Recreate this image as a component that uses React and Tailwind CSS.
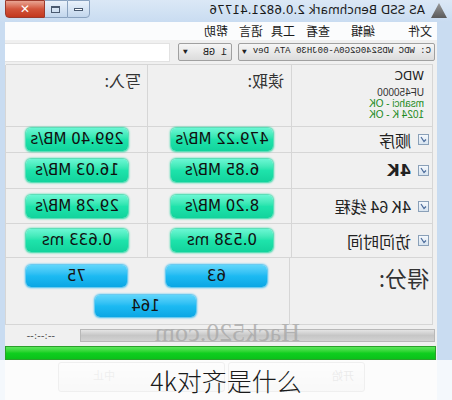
import React from 'react';

const ROWS = [
  { label: '顺序', read: '479.22 MB/s', write: '299.40 MB/s', h: 'h-[26px]' },
  { label: '4K', read: '6.85 MB/s', write: '16.03 MB/s', h: 'h-[36px]', bold: true },
  { label: '4K 64 线程', read: '8.20 MB/s', write: '29.28 MB/s', h: 'h-[35px]' },
  { label: '访问时间', read: '0.538 ms', write: '0.633 ms', h: 'h-[34px]' },
];

const MENU = [
  { t: '文件', ml: 'ml-[5px]' },
  { t: '编辑', ml: 'ml-[32px]' },
  { t: '查看', ml: 'ml-[20px]' },
  { t: '工具', ml: 'ml-[10px]' },
  { t: '语言', ml: 'ml-[7px]' },
  { t: '帮助', ml: 'ml-[10px]' },
];

function ValBox({ value }) {
  return (
    <div className="h-[23px] w-[102px] rounded-[5px] bg-linear-to-b from-[#6af7d4] via-[#1ee3ab] to-[#12d39c] shadow-[0_0_2px_1px_#2bd8a4] flex items-center justify-center text-[15px] font-['DejaVu_Sans'] text-[#101010]">
      {value}
    </div>
  );
}

function ScoreBox({ value }) {
  return (
    <div className="h-[22px] w-[101px] rounded-[5px] bg-linear-to-b from-[#5fd6fb] via-[#1cbaf2] to-[#0aa6e4] shadow-[0_0_2px_1px_#3cbdf0] flex items-center justify-center text-[15px] font-['DejaVu_Sans'] text-[#141414]">
      {value}
    </div>
  );
}

function Check() {
  return (
    <div className="w-[11px] h-[11px] border border-[#8aa0b8] bg-linear-to-b from-[#f4f8fc] to-[#d8e4f0] flex items-center justify-center">
      <svg width="7" height="7" viewBox="0 0 7 7">
        <path d="M1 3.5 L3 5.5 L6 1" stroke="#4a6a9a" strokeWidth="1.2" fill="none" />
      </svg>
    </div>
  );
}

export default function App() {
  return (
    <div className="relative w-[452px] h-[400px] overflow-hidden bg-[#c9dcf1]">
      {/* the whole window is shown mirrored */}
      <div className="relative -scale-x-100 w-full h-full flex flex-col font-['Noto_Sans_CJK_SC',sans-serif]">
        {/* title bar */}
        <div className="h-[22px] flex items-start bg-linear-to-b from-[#dbe8f6] to-[#c9dcf1]">
          <div className="mt-[3px] ml-[5px] w-[16px] h-[15px] bg-linear-to-b from-[#9a9a9a] to-[#5a5a5a] [clip-path:polygon(50%_0,100%_100%,0_100%)]" />
          <div className="ml-[6px] mt-[3px] text-[12px] leading-[15px] text-[#1a1a1a] font-['DejaVu_Sans']">AS SSD Benchmark 2.0.6821.41776</div>
          <div className="ml-auto mr-[5px] flex h-[18px]">
            <div className="w-[23px] h-full border border-[#8aa2bf] rounded-bl-[4px] bg-linear-to-b from-[#eaf2fb] to-[#c2d6ec] flex items-center justify-center">
              <div className="w-[9px] h-[3px] border border-[#4a5a70] bg-white" />
            </div>
            <div className="w-[22px] h-full border-y border-[#8aa2bf] bg-linear-to-b from-[#eaf2fb] to-[#c2d6ec] flex items-center justify-center">
              <div className="w-[9px] h-[7px] border border-[#4a5a70] border-t-2" />
            </div>
            <div className="w-[40px] h-full border border-[#9c3a2c] rounded-br-[4px] bg-linear-to-b from-[#e8a493] via-[#d2543b] to-[#c3381e] flex items-center justify-center text-white text-[12px] font-bold font-['DejaVu_Sans']">
              ✕
            </div>
          </div>
        </div>

        <div className="ml-[15px] mr-[5px] flex-1 bg-[#f0f0f0] flex flex-col">
          {/* menu bar */}
          <div className="h-[18px] bg-[#fbfcfd] flex items-center text-[12px] text-[#1a1a1a]">
            {MENU.map((m) => (
              <span key={m.t} className={`${m.ml} w-[25px] shrink-0`}>{m.t}</span>
            ))}
          </div>

          {/* toolbar */}
          <div className="h-[24px] flex items-center pl-[2px]">
            <div className="h-[18px] w-[197px] border border-[#a0a0a0] rounded-[2px] bg-linear-to-b from-[#f6f6f6] to-[#dcdcdc] flex items-center px-[3px] text-[9px] font-['Liberation_Mono'] text-[#222]">
              <span>C: WDC WDS240G2G0A-00JH30 ATA Dev</span>
              <span className="ml-auto text-[8px]">▼</span>
            </div>
            <div className="ml-[6px] h-[18px] w-[54px] border border-[#a0a0a0] rounded-[2px] bg-linear-to-b from-[#f6f6f6] to-[#dcdcdc] flex items-center px-[4px] text-[10px] font-['Liberation_Mono'] text-[#222]">
              <span>1 GB</span>
              <span className="ml-auto text-[8px]">▼</span>
            </div>
            <div className="ml-[8px] h-[19px] flex-1 bg-white border-y border-l border-[#e2e2e2]" />
          </div>

          {/* results table */}
          <div className="ml-[4px] mr-[1px] border-t border-l border-[#d6d6d6]">
            <div className="grid grid-cols-[141px_144px_142px] h-[62px]">
              <div className="border-r border-b border-[#d6d6d6] pl-[8px] pt-[4px] overflow-hidden">
                <div className="text-[12px] leading-[14px] text-[#222] font-['DejaVu_Sans']">WDC</div>
                <div className="mt-[5px] text-[10px] leading-[10px] text-[#333] font-['Liberation_Sans']">UF450000</div>
                <div className="text-[10px] leading-[11px] text-[#1b8a1b] font-['Liberation_Sans']">msahci - OK</div>
                <div className="text-[10px] leading-[11px] text-[#1b8a1b] font-['Liberation_Sans']">1024 K - OK</div>
              </div>
              <div className="border-r border-b border-[#d6d6d6] pl-[7px] pt-[3px] text-[16px] text-[#333]">读取:</div>
              <div className="border-r border-b border-[#d6d6d6] pl-[6px] pt-[3px] text-[16px] text-[#333]">写入:</div>
            </div>
            {ROWS.map((r) => (
              <div key={r.label} className={`grid grid-cols-[141px_144px_142px] ${r.h}`}>
                <div className="border-r border-b border-[#d6d6d6] flex items-center pl-[3px] gap-[7px]">
                  <Check />
                  <span className={`text-[16px] text-[#222] ${r.bold ? "font-bold font-['DejaVu_Sans'] text-[16px]" : ''}`}>{r.label}</span>
                </div>
                <div className="border-r border-b border-[#d6d6d6] flex items-center pl-[18px]">
                  <ValBox value={r.read} />
                </div>
                <div className="border-r border-b border-[#d6d6d6] flex items-center pl-[19px]">
                  <ValBox value={r.write} />
                </div>
              </div>
            ))}
            <div className="grid grid-cols-[143px_284px] h-[67px]">
              <div className="border-r border-b border-[#d6d6d6] pl-[3px] pt-[3px] text-[22px] text-[#333]">得分:</div>
              <div className="border-r border-b border-[#d6d6d6] pl-[22px] pt-[7px] flex flex-col">
                <div className="flex gap-[39px]">
                  <ScoreBox value="63" />
                  <ScoreBox value="75" />
                </div>
                <div className="ml-[71px] mt-[8px]">
                  <ScoreBox value="164" />
                </div>
              </div>
            </div>
          </div>

          {/* progress */}
          <div className="h-[21px] flex items-center pl-[2px]">
            <div className="h-[13px] w-[355px] border border-[#b8b8b8] bg-linear-to-b from-[#e4e4e4] via-[#c6c6c6] to-[#d2d2d2]" />
            <span className="ml-[25px] text-[10px] text-[#555] font-['DejaVu_Sans']">--:--:--</span>
          </div>
          <div className="h-[14px] ml-[1px] border border-[#2aa02a] bg-linear-to-b from-[#5ae65a] via-[#0fcf1f] to-[#0ac21a]" />

          {/* buttons */}
          <div className="mt-[2px] flex pl-[72px] gap-[3px]">
            <div className="h-[30px] w-[137px] border border-[#adadad] rounded-[3px] bg-linear-to-b from-[#f4f4f4] to-[#dedede] flex items-start pt-[4px] pl-[10px] text-[11px] text-[#999]">开始</div>
            <div className="h-[30px] w-[167px] border border-[#adadad] rounded-[3px] bg-linear-to-b from-[#f4f4f4] to-[#dedede] flex items-start justify-end pt-[4px] pr-[34px] text-[11px] text-[#aaa]">中止</div>
          </div>
        </div>

        {/* watermark */}
        <div className="absolute left-[152px] top-[318px] text-[26px] leading-[30px] text-[#a8a8a8]/80 font-['Liberation_Serif']">
          Hack520.com
        </div>
      </div>

      {/* caption */}
      <div className="absolute left-0 right-0 top-[360px] h-[40px] bg-white/80 flex items-center justify-center">
        <span className="text-[25px] leading-[30px] text-[#1a1a1a] font-['Noto_Sans_CJK_SC',sans-serif] font-light">4k对齐是什么</span>
      </div>
    </div>
  );
}
